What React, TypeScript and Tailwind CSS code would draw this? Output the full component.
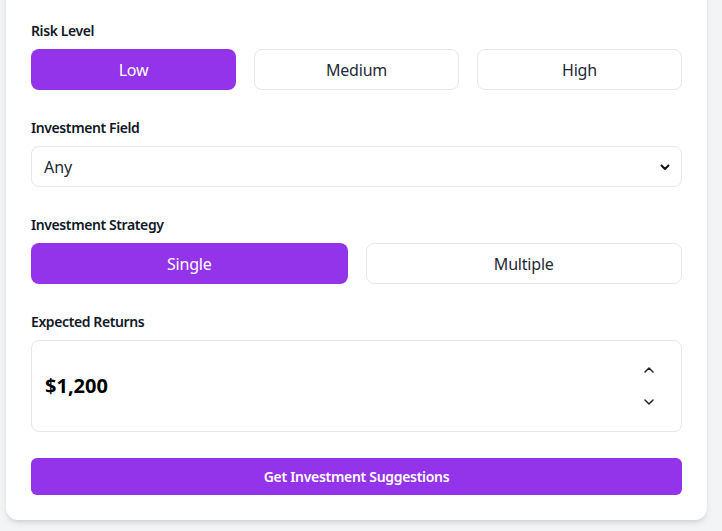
import React from "react";

const Label = ({ children }: { children: React.ReactNode }) => (
  <div className="h-[20px] mb-[8px] text-[14px] leading-[20px] font-semibold tracking-[-0.4px] text-[#111827]">{children}</div>
);

export default function App() {
  return (
    <div className="min-h-[531px] w-[722px] bg-[#f3f4f6] overflow-hidden font-['Noto_Sans',sans-serif]">
      <div className="ml-[6px] mt-[-19px] w-[701px] rounded-xl bg-white shadow-md px-[25px] pt-[40px] pb-[25px]">
        <div className="flex flex-col gap-[28px]">
          <div>
            <Label>Risk Level</Label>
            <div className="grid grid-cols-3 gap-[18px]">
              <button className="h-[41px] rounded-lg bg-[#9333ea] text-white text-[16px] tracking-[-0.2px]">Low</button>
              <button className="h-[41px] rounded-lg border border-[#e5e7eb] bg-white text-[#1f2937] text-[16px] tracking-[-0.2px]">Medium</button>
              <button className="h-[41px] rounded-lg border border-[#e5e7eb] bg-white text-[#1f2937] text-[16px] tracking-[-0.2px]">High</button>
            </div>
          </div>
          <div>
            <Label>Investment Field</Label>
            <div className="h-[41px] rounded-lg border border-[#e5e7eb] flex items-center justify-between pl-[12px] pr-[10px] text-[16px] text-[#1f2937]">
              <span>Any</span>
              <svg width="12" height="12" viewBox="0 0 12 12" fill="none">
                <path d="M2.5 4.5 L6 8 L9.5 4.5" stroke="#111" strokeWidth="2" strokeLinecap="round" strokeLinejoin="round" />
              </svg>
            </div>
          </div>
          <div>
            <Label>Investment Strategy</Label>
            <div className="grid grid-cols-2 gap-[18px]">
              <button className="h-[41px] rounded-lg bg-[#9333ea] text-white text-[16px] tracking-[-0.2px]">Single</button>
              <button className="h-[41px] rounded-lg border border-[#e5e7eb] bg-white text-[#1f2937] text-[16px] tracking-[-0.2px]">Multiple</button>
            </div>
          </div>
          <div>
            <Label>Expected Returns</Label>
            <div className="h-[92px] rounded-lg border border-[#e5e7eb] flex items-center justify-between pl-[13px] pr-[26px]">
              <span className="text-[20px] font-bold text-black">$1,200</span>
              <div className="flex flex-col gap-[20px] items-center">
                <svg width="12" height="12" viewBox="0 0 12 12" fill="none">
                  <path d="M2 8 L6 4 L10 8" stroke="#222" strokeWidth="1.5" strokeLinecap="round" strokeLinejoin="round" />
                </svg>
                <svg width="12" height="12" viewBox="0 0 12 12" fill="none">
                  <path d="M2 4 L6 8 L10 4" stroke="#222" strokeWidth="1.5" strokeLinecap="round" strokeLinejoin="round" />
                </svg>
              </div>
            </div>
          </div>
        </div>
        <button className="mt-[26px] w-full h-[37px] rounded-md bg-[#9333ea] text-white text-[14px] font-semibold tracking-[-0.3px]">
          Get Investment Suggestions
        </button>
      </div>
    </div>
  );
}
